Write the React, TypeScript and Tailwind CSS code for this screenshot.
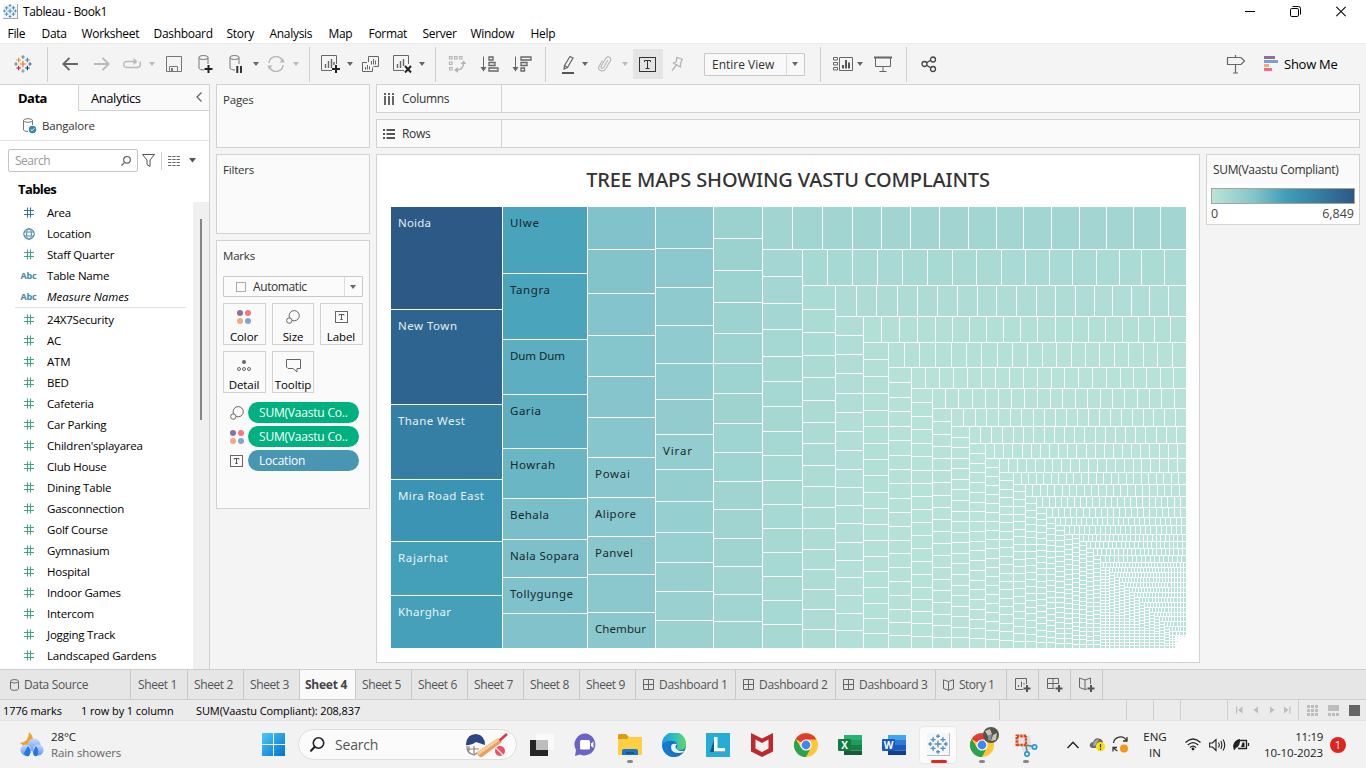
import React from "react";

/* ---------- Treemap ---------- */

type Cell = { x: number; y: number; w: number; h: number; fill: string };

const X0 = 391;
const Y0 = 207;
const X1 = 1187;
const Y1 = 649;

const mix = (a: string, b: string, t: number) => {
  const p = (s: string, i: number) => parseInt(s.slice(1 + i * 2, 3 + i * 2), 16);
  const c = [0, 1, 2].map((i) => Math.round(p(a, i) + (p(b, i) - p(a, i)) * t));
  return `rgb(${c.join(",")})`;
};

type Strip = { dir: "c" | "r"; end: number; cuts: number[] | number; from: string; to: string; fills?: string[] };

const strips: Strip[] = [
  {
    dir: "c", end: 502, cuts: [309, 404, 479, 541, 595], from: "", to: "",
    fills: ["#2c5985", "#2e6590", "#357fa5", "#3b94b3", "#449fb9", "#46a0ba"],
  },
  {
    dir: "c", end: 587, cuts: [273, 339, 394, 448, 498, 539, 577, 613], from: "", to: "",
    fills: ["#48a3bb", "#4aa4bc", "#5daec0", "#5fafc1", "#6bb6c4", "#79bec8", "#7dc0ca", "#80c2cb", "#82c3cb"],
  },
  { dir: "c", end: 655, cuts: [249, 293, 335, 376, 417, 457, 497, 536, 574, 612], from: "#82c3cb", to: "#8bc8ce" },
  { dir: "c", end: 713, cuts: [248, 287, 325, 363, 399, 434, 469, 501, 532, 562, 591, 620], from: "#8bc8ce", to: "#9bd2d0" },
  { dir: "c", end: 762, cuts: [238, 270, 302, 333, 363, 393, 423, 452, 481, 509, 538, 566, 594, 621], from: "#9bd2d0", to: "#a1d5d1" },
  { dir: "r", end: 249, cuts: [792, 822, 852, 881, 910, 939, 968, 996, 1023, 1051, 1079, 1106, 1133, 1160], from: "#a1d5d1", to: "#a3d6d2" },
  { dir: "c", end: 802, cuts: [276, 303, 329, 356, 381, 406, 431, 455, 480, 504, 528, 552, 576, 600, 624], from: "#a4d7d3", to: "#a7d9d4" },
  { dir: "r", end: 285, cuts: [827, 852, 877, 902, 927, 952, 976, 1001, 1025, 1049, 1072, 1096, 1119, 1141, 1164], from: "#a7d9d4", to: "#abdbd5" },
  { dir: "c", end: 835, cuts: [309, 332, 355, 377, 400, 422, 443, 465, 486, 507, 528, 549, 569, 589, 609, 629], from: "#abdbd5", to: "#aedcd5" },
  { dir: "r", end: 316, cuts: [856, 876, 897, 917, 937, 957, 977, 996, 1016, 1036, 1055, 1075, 1094, 1112, 1131, 1149, 1168], from: "#aedcd5", to: "#b0ded7" },
  { dir: "c", end: 863, cuts: [335, 354, 373, 393, 412, 431, 450, 469, 487, 505, 523, 542, 560, 577, 595, 613, 630], from: "#b0ded7", to: "#b2dfd7" },
  { dir: "r", end: 342, cuts: [881, 899, 917, 935, 952, 969, 986, 1003, 1020, 1037, 1055, 1072, 1088, 1105, 1122, 1138, 1154, 1170], from: "#b2e0d6", to: "#b3e0d6" },
  { dir: "c", end: 888, cuts: [359, 376, 393, 410, 426, 443, 459, 475, 492, 508, 524, 540, 556, 571, 587, 603, 618, 633], from: "#b3e0d6", to: "#b4e1d7" },
  { dir: "r", end: 367, cuts: [904, 919, 935, 951, 966, 981, 997, 1012, 1027, 1042, 1056, 1071, 1085, 1099, 1114, 1128, 1143, 1157, 1172], from: "#b4e1d7", to: "#b5e1d7" },
  { dir: "c", end: 911, cuts: [382, 397, 411, 426, 440, 455, 469, 483, 498, 512, 526, 540, 553, 567, 581, 595, 609, 622, 635], from: "#b5e1d7", to: "#b6e1d7" },
  { dir: "r", end: 388, cuts: [925, 939, 953, 967, 981, 995, 1009, 1023, 1037, 1051, 1064, 1078, 1092, 1106, 1120, 1133, 1146, 1160, 1173], from: "#b6e2d7", to: "#b6e2d7" },
  { dir: "c", end: 932, cuts: [402, 416, 429, 443, 456, 470, 483, 496, 509, 522, 535, 548, 561, 574, 587, 599, 611, 623, 636], from: "#b6e2d7", to: "#b7e2d8" },
  { dir: "r", end: 408, cuts: [945, 958, 972, 985, 998, 1011, 1024, 1037, 1050, 1062, 1075, 1087, 1100, 1112, 1124, 1137, 1149, 1161, 1174], from: "#b7e2d8", to: "#b7e2d8" },
  { dir: "c", end: 951, cuts: [421, 434, 446, 458, 470, 482, 495, 507, 519, 531, 543, 555, 567, 579, 590, 602, 614, 625, 637], from: "#b7e2d8", to: "#b7e2d8" },
  { dir: "r", end: 426, cuts: [963, 975, 986, 998, 1010, 1021, 1033, 1044, 1055, 1066, 1077, 1088, 1099, 1110, 1121, 1132, 1143, 1153, 1164, 1175], from: "#b7e3d8", to: "#b8e3d8" },
  { dir: "c", end: 969, cuts: 21, from: "#b8e3d8", to: "#b8e3d8" },
  { dir: "r", end: 443, cuts: [980, 991, 1002, 1013, 1023, 1033, 1044, 1054, 1064, 1074, 1084, 1095, 1105, 1115, 1125, 1135, 1145, 1156, 1166, 1176], from: "#b8e3d8", to: "#b8e3d8" },
];

const tail: [("c" | "r"), number, number][] = [
  ["c", 985, 21], ["r", 458, 22], ["c", 999, 21], ["r", 472, 21], ["c", 1013, 21], ["r", 484, 23],
  ["c", 1025, 22], ["r", 496, 22], ["c", 1036, 22], ["r", 507, 24], ["c", 1046, 23], ["r", 517, 23],
  ["c", 1055, 23], ["r", 525, 25], ["c", 1064, 24], ["r", 534, 24], ["c", 1072, 23], ["c", 1079, 26],
  ["r", 541, 25], ["c", 1086, 25], ["r", 548, 23], ["c", 1093, 24], ["r", 555, 22], ["c", 1100, 22],
  ["r", 562, 19], ["r", 567, 27], ["c", 1105, 27], ["c", 1109, 27], ["r", 572, 25], ["c", 1114, 25],
  ["r", 577, 24], ["c", 1119, 24], ["r", 582, 22], ["c", 1124, 22], ["r", 587, 20], ["c", 1129, 20],
  ["r", 592, 19], ["c", 1134, 19], ["r", 597, 17], ["c", 1139, 17], ["r", 602, 15], ["c", 1144, 15],
  ["r", 607, 14], ["c", 1149, 14], ["r", 612, 12], ["c", 1154, 12], ["r", 616, 11], ["c", 1159, 11],
  ["r", 621, 9], ["c", 1164, 9], ["r", 626, 7], ["c", 1169, 8], ["r", 631, 6], ["r", 635, 5],
  ["c", 1172, 5], ["c", 1175, 5],
];

tail.forEach(([dir, end, cuts]) => strips.push({ dir, end, cuts, from: "#b9e4d8", to: "#bae4d8" }));

const buildCells = () => {
  const cells: Cell[] = [];
  let x = X0;
  let y = Y0;
  for (const s of strips) {
    const start = s.dir === "c" ? y : x;
    const stop = s.dir === "c" ? Y1 : X1;
    let cuts: number[];
    if (typeof s.cuts === "number") {
      const n = s.cuts;
      cuts = Array.from({ length: n - 1 }, (_, i) => {
        const t = (i + 1) / n;
        return Math.round(start + (stop - start) * t) - 1;
      });
    } else cuts = s.cuts;
    const edges = [start - 1, ...cuts, stop - 1];
    for (let i = 0; i < edges.length - 1; i++) {
      const a = edges[i] + 1;
      const len = edges[i + 1] - a;
      const fill = s.fills ? s.fills[i] : mix(s.from, s.to, i / (edges.length - 2));
      cells.push(
        s.dir === "c"
          ? { x, y: a, w: s.end - x, h: len, fill }
          : { x: a, y, w: len, h: s.end - y, fill }
      );
    }
    if (s.dir === "c") x = s.end + 1;
    else y = s.end + 1;
  }
  [[1177, 636], [1180, 636], [1184, 636], [1177, 638], [1180, 638], [1177, 641]].forEach(([cx, cy]) =>
    cells.push({ x: cx, y: cy, w: 1, h: 1, fill: "#bae4d8" })
  );
  return cells;
};

const cells = buildCells();

const labels: [string, number, number, number, string][] = [
  ["Noida", 398, 227, 33, "#e4edf2"],
  ["New Town", 398, 330, 59, "#e4edf2"],
  ["Thane West", 398, 425, 67, "#e6f0f4"],
  ["Mira Road East", 398, 500, 86, "#e8f3f6"],
  ["Rajarhat", 398, 562, 50, "#e8f4f7"],
  ["Kharghar", 398, 616, 53, "#e8f4f7"],
  ["Ulwe", 510, 227, 29, "#16282d"],
  ["Tangra", 510, 294, 40, "#16282d"],
  ["Dum Dum", 510, 360, 55, "#16282d"],
  ["Garia", 510, 415, 31, "#16282d"],
  ["Howrah", 510, 469, 45, "#16282d"],
  ["Behala", 510, 519, 39, "#16282d"],
  ["Nala Sopara", 510, 560, 69, "#16282d"],
  ["Tollygunge", 510, 598, 63, "#16282d"],
  ["Powai", 595, 478, 35, "#1b2b2e"],
  ["Alipore", 595, 518, 41, "#1b2b2e"],
  ["Panvel", 595, 557, 38, "#1b2b2e"],
  ["Chembur", 595, 633, 51, "#1b2b2e"],
  ["Virar", 663, 455, 29, "#1b2b2e"],
];

const Treemap = () => (
  <svg className="block" width={796} height={442} viewBox={`${X0} ${Y0} 796 442`} shapeRendering="crispEdges">
    {cells.map((c, i) => (
      <rect key={i} x={c.x} y={c.y} width={c.w} height={c.h} fill={c.fill} />
    ))}
    {labels.map(([t, x, y, w, f]) => (
      <text key={t} x={x} y={y} fill={f} textLength={w} className="font-['Noto_Sans',sans-serif] text-[11.5px]">
        {t}
      </text>
    ))}
  </svg>
);

/* ---------- Icons ---------- */

type SvgProps = { w: number; h: number; className?: string; children: React.ReactNode };
const I = ({ w, h, className = "", children }: SvgProps) => (
  <svg width={w} height={h} viewBox={`0 0 ${w} ${h}`} fill="none" className={`block shrink-0 ${className}`}>
    {children}
  </svg>
);

const Plus = ({ x, y, r, c }: { x: number; y: number; r: number; c: string }) => (
  <path d={`M${x - r} ${y}H${x + r}M${x} ${y - r}V${y + r}`} stroke={c} strokeWidth={1.2} />
);

const TableauMark = ({ mono, size = 18 }: { mono?: string; size?: number }) => (
  <svg width={size} height={size} viewBox="0 0 18 18" fill="none" className="block shrink-0">
    <Plus x={9} y={9} r={3.2} c={mono ?? "#e8762d"} />
    <Plus x={4.6} y={5} r={2.3} c={mono ?? "#eb912c"} />
    <Plus x={13.4} y={5} r={2.3} c={mono ?? "#59879b"} />
    <Plus x={4.6} y={13} r={2.3} c={mono ?? "#c72035"} />
    <Plus x={13.4} y={13} r={2.3} c={mono ?? "#1f457e"} />
    <Plus x={9} y={2} r={1.7} c={mono ?? "#5b879b"} />
    <Plus x={9} y={16} r={1.7} c={mono ?? "#7099a6"} />
    <Plus x={2} y={9} r={1.7} c={mono ?? "#5b879b"} />
    <Plus x={16} y={9} r={1.7} c={mono ?? "#5c6692"} />
  </svg>
);

const Caret = ({ className = "", c = "#666" }: { className?: string; c?: string }) => (
  <I w={6} h={4} className={className}>
    <path d="M0 0H6L3 4Z" fill={c} />
  </I>
);

const Sep = ({ className }: { className: string }) => <div className={`h-[35px] w-px shrink-0 bg-[#cfcfcf] ${className}`} />;

const Hash = ({ c }: { c: string }) => (
  <I w={10} h={11}>
    <path d="M3.5 0.5V10.5M6.5 0.5V10.5M0 3.5H10M0 7.5H10" stroke={c} strokeWidth={1.1} />
  </I>
);

const Globe = () => (
  <I w={12} h={12}>
    <circle cx={6} cy={6} r={5.2} stroke="#4e8fae" strokeWidth={1.2} />
    <ellipse cx={6} cy={6} rx={2.4} ry={5.2} stroke="#4e8fae" />
    <path d="M1 4H11M1 8H11" stroke="#4e8fae" />
  </I>
);

const ColorDots = ({ className = "" }: { className?: string }) => (
  <I w={14} h={14} className={className}>
    <circle cx={3} cy={3} r={3} fill="#8a729b" />
    <circle cx={11} cy={3} r={3} fill="#f97480" />
    <circle cx={3} cy={11} r={3} fill="#f5a87d" />
    <circle cx={11} cy={11} r={3} fill="#83a5cd" />
  </I>
);

const SizeIcon = () => (
  <I w={14} h={14}>
    <circle cx={8.2} cy={5.7} r={5.1} stroke="#666" />
    <circle cx={3.3} cy={10.6} r={2.7} stroke="#666" fill="#fafafa" />
  </I>
);

const LabelIcon = () => (
  <I w={13} h={12}>
    <rect x={0.5} y={0.5} width={12} height={11} stroke="#666" />
    <path d="M4 4.5V3.5H9V4.5M6.5 3.5V8.5M5.3 8.5H7.7" stroke="#555" />
  </I>
);

const DbIcon = ({ children, c = "#777" }: { children?: React.ReactNode; c?: string }) => (
  <>
    <ellipse cx={5.5} cy={2.5} rx={4.6} ry={2} stroke={c} />
    <path d="M1 2.5V13C1 14 3 15 6 15M10 2.5V9" stroke={c} />
    {children}
  </>
);

const GridIcon = () => (
  <I w={11} h={11}>
    <path d="M0.5 0.5H10.5V10.5H0.5ZM5.5 0.5V10.5M0.5 5.5H10.5" stroke="#666" />
  </I>
);

const BookIcon = () => (
  <I w={11} h={12}>
    <path d="M0.5 0.8L5.5 2.5L10.5 0.8V9.5L5.5 11.3L0.5 9.5ZM5.5 2.5V11.3" stroke="#666" />
  </I>
);

/* ---------- Top area ---------- */

const TitleBar = () => (
  <div className="flex h-[23px] items-center pl-[3px]">
    <div className="border-b border-r border-[#aaa] bg-[#f3f6f8]">
      <TableauMark mono="#3f88b5" size={14} />
    </div>
    <span className="ml-[5px] text-[12px] leading-none tracking-[-0.4px] text-black">Tableau - Book1</span>
    <div className="ml-auto flex items-center pr-[20px]">
      <I w={10} h={11} className="mr-[35px]">
        <path d="M0 5.5H10" stroke="#000" />
      </I>
      <I w={11} h={11} className="mr-[35px]">
        <rect x={0.5} y={2.5} width={8} height={8} rx={1.3} stroke="#000" />
        <path d="M2.5 0.5H8.5Q10.5 0.5 10.5 2.5V8.5" stroke="#000" />
      </I>
      <I w={10} h={11}>
        <path d="M0.3 0.8L9.7 10.2M9.7 0.8L0.3 10.2" stroke="#000" strokeWidth={1.1} />
      </I>
    </div>
  </div>
);

const menus: [string, string][] = [
  ["File", "w-[34px]"], ["Data", "w-[40px]"], ["Worksheet", "w-[72px]"], ["Dashboard", "w-[73px]"],
  ["Story", "w-[43px]"], ["Analysis", "w-[59px]"], ["Map", "w-[40px]"], ["Format", "w-[54px]"],
  ["Server", "w-[48px]"], ["Window", "w-[60px]"], ["Help", "w-[30px]"],
];

const MenuBar = () => (
  <div className="flex h-5 items-center pl-[7.5px] text-[12px] leading-none text-black">
    {menus.map(([m, w]) => (
      <span key={m} className={`shrink-0 pt-0.5 tracking-[-0.3px] ${w}`}>{m}</span>
    ))}
  </div>
);

const Toolbar = () => (
  <div className="flex h-[41px] items-center border-t border-[#ebebeb] bg-[#f4f4f4]">
    <div className="ml-[14px]"><TableauMark /></div>
    <Sep className="ml-[15px]" />
    <I w={16} h={14} className="ml-[14px]">
      <path d="M16 7H1.5M7.5 0.8L1.3 7L7.5 13.2" stroke="#666" strokeWidth={1.9} />
    </I>
    <I w={16} h={14} className="ml-[16px]">
      <path d="M0 7H14.5M8.5 0.8L14.7 7L8.5 13.2" stroke="#bababa" strokeWidth={1.9} />
    </I>
    <I w={18} h={12} className="ml-[13px]">
      <path d="M12 3.5H4Q0.7 3.5 0.7 6.5T4 9.5H14Q17.3 9.5 17.3 6.8V3.5" stroke="#bababa" strokeWidth={1.4} />
      <path d="M10.5 0V7L14.5 3.5Z" fill="#bababa" />
    </I>
    <Caret className="ml-2" c="#bababa" />
    <I w={16} h={16} className="ml-[11px]">
      <path d="M0.5 0.5H15.5V15.5H0.5Z" stroke="#777" />
      <path d="M3.5 15V10.5H11.5V15" stroke="#777" />
      <path d="M5 12H7V15H5Z" fill="#777" />
    </I>
    <I w={16} h={18} className="ml-[16px]">
      <DbIcon />
      <path d="M10.5 10V18M6.5 14H14.5" stroke="#222" strokeWidth={2} />
    </I>
    <I w={16} h={18} className="ml-[15px]">
      <DbIcon />
      <path d="M8.3 11V18M12 11V18" stroke="#333" strokeWidth={2} />
    </I>
    <Caret className="ml-2" />
    <I w={18} h={16} className="ml-2">
      <path d="M2 7A7 7 0 0 1 15 4M16 9A7 7 0 0 1 3 12" stroke="#bababa" strokeWidth={1.5} />
      <path d="M12.5 6.5H17.5L16 2ZM0.5 9.5H5.5L2 14Z" fill="#bababa" />
    </I>
    <Caret className="ml-2" c="#bababa" />
    <Sep className="ml-[10px]" />
    <I w={21} h={18} className="ml-[11px] -mr-px">
      <path d="M15.5 9V0.5H0.5V15.5H11" stroke="#666" />
      <path d="M4.5 13V9M7.5 13V6M10.5 13V4M13 10V7" stroke="#666" strokeWidth={1.4} />
      <path d="M15 10V18M11 14H19" stroke="#222" strokeWidth={2} />
    </I>
    <Caret className="ml-1.5" />
    <I w={19} h={17} className="ml-[9px]">
      <path d="M6.5 6V0.5H16.5V10.5H11.5" stroke="#666" />
      <path d="M5 6.5H0.5V15.5H10.5V11.5" stroke="#666" />
      <path d="M9.5 8.5V5M11.5 8.5V3M13.5 8.5V4.5M3.5 13.5V11M5.5 13.5V9M7.5 13.5V10.5" stroke="#666" />
    </I>
    <I w={21} h={18} className="ml-[12px] -mr-px">
      <path d="M15.5 9V0.5H0.5V15.5H11" stroke="#666" />
      <path d="M4.5 13V9M7.5 13V6M10.5 11V4" stroke="#666" strokeWidth={1.4} />
      <path d="M12 11L18 17.5M18 11L12 17.5" stroke="#222" strokeWidth={2} />
    </I>
    <Caret className="ml-1.5" />
    <Sep className="ml-[10px]" />
    <I w={19} h={18} className="ml-[12px]">
      <path d="M1.5 1.5H4V4H1.5ZM6.5 1.5H9V4H6.5ZM11.5 1.5H14V4H11.5ZM1.5 7H4V9.5H1.5ZM1.5 12.5H4V15H1.5Z" stroke="#b5b5b5" strokeWidth={1.2} />
      <path d="M15.5 8Q15.5 14.5 9 15" stroke="#b5b5b5" strokeWidth={1.5} />
      <path d="M12.5 9L15.5 5.5L18.5 9ZM10 12V18L6 15Z" fill="#b5b5b5" />
    </I>
    <I w={20} h={16} className="ml-[13px]">
      <path d="M3.5 0.5V12" stroke="#666" />
      <path d="M0.5 11H6.5L3.5 15.5Z" fill="#666" />
      <path d="M9 1H13V4H9ZM9 6.500H15V9.500H9ZM9 12H18V15H9Z" stroke="#666" strokeWidth={1.3} />
    </I>
    <I w={20} h={16} className="ml-[12px]">
      <path d="M3.5 0.5V12" stroke="#666" />
      <path d="M0.5 11H6.5L3.5 15.5Z" fill="#666" />
      <path d="M9 1H19V4H9ZM9 6.500H15V9.500H9ZM9 12H12.500V15H9Z" stroke="#666" strokeWidth={1.3} />
    </I>
    <Sep className="ml-[13px]" />
    <I w={14} h={19} className="ml-[15px]">
      <path d="M9 1.5L12 3L6.5 12.5L3 14L3.5 10.5ZM3.5 10.5L6.5 12.5" stroke="#666" strokeWidth={1.2} />
      <path d="M1 18H13" stroke="#555" strokeWidth={2} />
    </I>
    <Caret className="ml-[7px]" />
    <I w={14} h={16} className="ml-[10px]">
      <path d="M10 4L5.5 11.5Q4.5 13 3.5 12T3.5 9.5L8 2Q9.5 0.2 11.5 1.2T12.5 4.5L7.5 13Q5.5 16 2.5 14.5T1 10.5L4.5 4.5" stroke="#b5b5b5" strokeWidth={1.1} />
    </I>
    <Caret className="ml-[10px]" c="#bababa" />
    <div className="ml-[5px] flex h-[30px] w-[30px] shrink-0 items-center justify-center bg-[#e4e4e4] pr-px">
      <I w={17} h={15}>
        <rect x={0.5} y={0.5} width={16} height={14} stroke="#333" />
        <path d="M5.5 5V3.5H11.5V5M8.5 3.5V11.5M6.5 11.5H10.5" stroke="#333" />
      </I>
    </div>
    <I w={13} h={16} className="ml-2">
      <path d="M5 1L12 3.5M6 1.5L5 6L2.5 7L9.5 11L9.5 8L11 3M5.5 9L1 14.5" stroke="#b5b5b5" strokeWidth={1.3} />
    </I>
    <div className="ml-[20px] flex h-[23px] w-[101px] shrink-0 items-center rounded-[1px] border border-[#c8c8c8] bg-[#f9f9f9]">
      <span className="flex-1 pl-[7px] pt-px text-[12px] leading-none text-[#333]">Entire View</span>
      <div className="flex h-full w-[18px] items-center justify-center border-l border-[#dcdcdc] pr-px"><Caret /></div>
    </div>
    <Sep className="ml-[15px]" />
    <I w={21} h={16} className="ml-[12px]">
      <path d="M0.5 1.5H4.5V4H0.5ZM0.5 6.5H4.5V9H0.5ZM0.5 11.5H4.5V14H0.5ZM6.5 1.5H19.5V14.5H6.5Z" stroke="#666" />
      <path d="M10 12.5V9M13 12.5V4M16 12.5V6.5" stroke="#555" strokeWidth={2} />
    </I>
    <Caret className="ml-[3px]" />
    <I w={18} h={16} className="ml-[11px]">
      <path d="M0 1.5H18" stroke="#666" strokeWidth={2} />
      <path d="M1.5 1.5V10.5H16.5V1.5M9 10.5V15.5M5.5 15.5H12.5" stroke="#666" />
    </I>
    <Sep className="ml-[14px]" />
    <I w={16} h={17} className="ml-[14px]">
      <path d="M6 6.5L10 4M6 9.5L10 12" stroke="#444" strokeWidth={1.4} />
      <circle cx={3.5} cy={8} r={2.5} stroke="#444" strokeWidth={1.3} />
      <circle cx={12} cy={3.5} r={2.5} stroke="#444" strokeWidth={1.3} />
      <circle cx={12} cy={13} r={2.5} stroke="#444" strokeWidth={1.3} />
    </I>
    <I w={20} h={19} className="ml-auto">
      <path d="M9.5 0V2M9.5 10V18M7 18H12M1.5 2.5H15L18.5 6L15 9.5H1.5Z" stroke="#666" strokeWidth={1.2} />
    </I>
    <I w={14} h={16} className="ml-[18px]">
      <path d="M0 0H11V3H0Z" fill="#8a729b" />
      <path d="M0 4H14V7H0Z" fill="#7ba0cc" />
      <path d="M0 8H5V11H0Z" fill="#f5a87d" />
      <path d="M0 12H8V15H0Z" fill="#f9697a" />
    </I>
    <span className="ml-1.5 mr-[28px] w-[54px] whitespace-nowrap text-[13px] leading-none tracking-[-0.25px] text-black">Show Me</span>
  </div>
);

/* ---------- Data pane ---------- */

const dims: [string, string][] = [
  ["Area", "hashb"], ["Location", "globe"], ["Staff Quarter", "hash"], ["Table Name", "abc"], ["Measure Names", "abci"],
];
const measures = [
  "24X7Security", "AC", "ATM", "BED", "Cafeteria", "Car Parking", "Children'splayarea", "Club House", "Dining Table",
  "Gasconnection", "Golf Course", "Gymnasium", "Hospital", "Indoor Games", "Intercom", "Jogging Track", "Landscaped Gardens",
];

const FieldRow = ({ name, kind }: { name: string; kind: string }) => (
  <div className="flex h-[21px] items-center">
    <div className="flex w-[17px] shrink-0 justify-center">
      {kind === "hash" && <Hash c="#45a583" />}
      {kind === "hashb" && <Hash c="#37779f" />}
      {kind === "globe" && <Globe />}
      {kind.startsWith("abc") && <span className="text-[9px] font-bold leading-none tracking-[-0.2px] text-[#4485a5]">Abc</span>}
    </div>
    <span className={`ml-[10px] whitespace-nowrap text-[11.5px] leading-none text-black ${kind === "abci" ? "italic" : "tracking-[-0.2px]"}`}>
      {name}
    </span>
  </div>
);

const DataPane = () => (
  <div className="flex w-[210px] shrink-0 flex-col border-r border-t border-[#d2d2d2] bg-white">
    <div className="flex h-[26px] shrink-0">
      <div className="w-[78px] pl-[18px] pt-[7px] text-[13px] font-bold leading-none tracking-[-0.5px] text-black">Data</div>
      <div className="flex flex-1 items-center border-b border-l border-[#d2d2d2] bg-[#fafafa] pl-3 text-[13px] leading-none tracking-[-0.45px] text-black">
        <span className="pt-px">Analytics</span>
        <I w={6} h={10} className="ml-auto mr-[7px] mb-0.5">
          <path d="M5.5 0.5L1 5L5.5 9.5" stroke="#666" strokeWidth={1.3} />
        </I>
      </div>
    </div>
    <div className="flex h-[30px] shrink-0 items-center border-b border-[#e3e3e3] pl-[23px]">
      <I w={14} h={16}>
        <ellipse cx={5} cy={2.5} rx={4.5} ry={1.8} stroke="#777" />
        <path d="M0.5 2.5V12Q1 13.5 5 13.5M9.5 2.5V7" stroke="#777" />
        <circle cx={9.5} cy={11.5} r={3.7} fill="#3a87ad" />
        <path d="M7.7 11.5L9 12.8L11.3 10.3" stroke="#fff" />
      </I>
      <span className="ml-[5px] text-[11.5px] leading-none tracking-[-0.2px] text-[#333]">Bangalore</span>
    </div>
    <div className="flex shrink-0 items-center pl-2 pt-2">
      <div className="flex h-[23px] w-[130px] items-center rounded-[2px] border border-[#c4c4c4] pl-1.5 pr-[6px]">
        <span className="flex-1 text-[12px] leading-none tracking-[-0.5px] text-[#999]">Search</span>
        <I w={10} h={10}>
          <circle cx={6} cy={3.8} r={3.3} stroke="#666" strokeWidth={1.2} />
          <path d="M3.6 6.4L0.5 9.5" stroke="#666" strokeWidth={1.3} />
        </I>
      </div>
      <I w={13} h={13} className="ml-1">
        <path d="M0.5 0.5H12.5L8 6V12.5L5 10.5V6Z" stroke="#555" />
      </I>
      <div className="ml-[6px] h-[18px] w-px bg-[#d0d0d0]" />
      <I w={12} h={10} className="ml-[6px]">
        <path d="M0 0.5H12M0 3.5H12M0 6.5H12M0 9.5H12" stroke="#666" strokeWidth={1.2} strokeDasharray="3.3 1" />
      </I>
      <I w={7} h={5} className="ml-[9px]"><path d="M0 0H7L3.5 4.5Z" fill="#555" /></I>
    </div>
    <div className="flex h-[30px] shrink-0 items-end pb-[6px] pl-[18px] text-[13px] font-bold leading-none tracking-[-0.6px] text-black">
      Tables
    </div>
    <div className="flex min-h-0 flex-1">
      <div className="flex-1 overflow-hidden pl-5">
        {dims.map(([n, k]) => <FieldRow key={n} name={n} kind={k} />)}
        <div className="-ml-[5px] mb-px mr-[7px] h-px bg-[#e0e0e0]" />
        {measures.map((n) => <FieldRow key={n} name={n} kind="hash" />)}
      </div>
      <div className="w-4 shrink-0 bg-[#f0f0f0] pl-[7px] pt-[17px]">
        <div className="h-[201px] w-[2px] bg-[#868686]" />
      </div>
    </div>
  </div>
);

/* ---------- Cards ---------- */

const card = "border border-[#d2d2d2] bg-[#fafafa]";
const cardTitle = "text-[11.5px] leading-none tracking-[-0.2px] text-[#333]";

const MarkButton = ({ label, children, w }: { label: string; children: React.ReactNode; w: string }) => (
  <div className={`flex h-[42px] flex-col items-center justify-between border border-[#d2d2d2] pb-px pt-[6px] ${w}`}>
    {children}
    <span className="text-[11.5px] leading-[12px] tracking-[-0.1px] text-black">{label}</span>
  </div>
);

const Pill = ({ icon, text, blue }: { icon: React.ReactNode; text: string; blue?: boolean }) => (
  <div className="flex h-[21px] items-center">
    <div className="flex w-[25px] pl-[7px]">{icon}</div>
    <div className={`flex h-[21px] w-[111px] items-center rounded-full pl-[11px] text-[12px] leading-none tracking-[-0.2px] text-white ${blue ? "bg-[#4996b2]" : "bg-[#00b180]"}`}>
      {text}
    </div>
  </div>
);

const Cards = () => (
  <div className="flex w-[154px] shrink-0 flex-col">
    <div className={`${card} h-16 pl-1.5 pt-[9px]`}><span className={`block ${cardTitle}`}>Pages</span></div>
    <div className={`${card} mt-1.5 h-20 pl-1.5 pt-[9px]`}><span className={`block ${cardTitle}`}>Filters</span></div>
    <div className={`${card} mt-1.5 h-[269px] pl-1.5 pr-1.5 pt-[9px]`}>
      <span className={`block ${cardTitle}`}>Marks</span>
      <div className="mt-[14.5px] flex h-[21px] w-[140px] items-center rounded-[1px] border border-[#c8c8c8] bg-[#fbfbfb]">
        <div className="ml-3 h-[10px] w-[10px] border border-[#aaa]" />
        <span className="ml-[7px] flex-1 pt-px text-[12px] leading-none tracking-[-0.4px] text-[#333]">Automatic</span>
        <div className="flex h-full w-[18px] items-center justify-center border-l border-[#dcdcdc] pr-px"><Caret /></div>
      </div>
      <div className="mt-[5.5px] flex flex-wrap gap-x-1.5 gap-y-1.5">
        <MarkButton label="Color" w="w-[43px] pr-px"><ColorDots /></MarkButton>
        <MarkButton label="Size" w="w-[42px]"><SizeIcon /></MarkButton>
        <MarkButton label="Label" w="w-[43px] pr-px"><div className="pt-px"><LabelIcon /></div></MarkButton>
        <MarkButton label="Detail" w="w-[43px] pr-px">
          <I w={14} h={12} className="mt-0.5">
            <circle cx={7} cy={2} r={2} fill="#666" />
            <circle cx={2} cy={9} r={1.5} stroke="#666" />
            <circle cx={7} cy={9} r={1.5} stroke="#666" />
            <circle cx={12} cy={9} r={1.5} stroke="#666" />
          </I>
        </MarkButton>
        <MarkButton label="Tooltip" w="w-[42px]">
          <I w={15} h={14} className="mt-px">
            <path d="M0.5 0.5H14.5V9.5H11V13L7 9.5H2L0.5 8Z" stroke="#666" />
          </I>
        </MarkButton>
      </div>
      <div className="mt-[9.5px] flex flex-col gap-[3px]">
        <Pill icon={<SizeIcon />} text="SUM(Vaastu Co.." />
        <Pill icon={<ColorDots />} text="SUM(Vaastu Co.." />
        <Pill icon={<LabelIcon />} text="Location" blue />
      </div>
    </div>
  </div>
);

const Shelf = ({ label, children }: { label: string; children: React.ReactNode }) => (
  <div className={`${card} flex h-[29px] shrink-0 items-stretch`}>
    <div className="flex w-[125px] items-center border-r border-[#d2d2d2] pl-1.5">
      {children}
      <span className="ml-[7px] text-[12px] leading-none tracking-[-0.3px] text-[#333]">{label}</span>
    </div>
  </div>
);

const Workspace = () => (
  <div className="flex min-w-0 flex-1 flex-col gap-1.5 pb-1.5">
    <Shelf label="Columns">
      <I w={12} h={12}><path d="M2 0V2M6 0V2M10 0V2M2 3V12M6 3V12M10 3V12" stroke="#666" strokeWidth={2} /></I>
    </Shelf>
    <Shelf label="Rows">
      <I w={12} h={10}><path d="M0 1H2M0 5H2M0 9H2M3.5 1H12M3.5 5H12M3.5 9H12" stroke="#555" strokeWidth={1.8} /></I>
    </Shelf>
    <div className="flex min-h-0 flex-1 gap-1.5">
      <div className="flex w-[824px] shrink-0 flex-col border border-[#d2d2d2] bg-white pl-[14px]">
        <h1 className="flex h-[52px] w-[794px] items-center justify-center pb-0.5 font-['Noto_Sans',sans-serif] text-[20px] font-medium leading-none tracking-[-0.12px] text-[#333]">
          TREE MAPS SHOWING VASTU COMPLAINTS
        </h1>
        <Treemap />
      </div>
      <div className="flex h-[71px] flex-1 flex-col border border-[#d2d2d2] bg-white">
        <div className="h-[29px] whitespace-nowrap bg-[#fafafa] pl-1.5 pt-[9px] text-[12px] leading-none tracking-[-0.3px] text-[#333]">SUM(Vaastu Compliant)</div>
        <div className="mx-1 mt-1 h-4 shrink-0 border border-[#aaa492] bg-[linear-gradient(90deg,#bce4d8,#81c4cb_30%,#45a2b9_50%,#3991b1_62%,#2c5985)]" />
        <div className="flex justify-between pl-1 pr-[5px] pt-1 text-[12.5px] leading-none text-[#444]">
          <span>0</span>
          <span>6,849</span>
        </div>
      </div>
    </div>
  </div>
);

/* ---------- Bottom bars ---------- */

const tabBase = "flex h-full shrink-0 items-center border-r border-[#c9c9c9] text-[12px] leading-none";

const SheetTabs = () => (
  <div className="flex h-[31px] shrink-0 border-b border-t border-[#cdcdcd] bg-[#e6e6e6] text-[#555]">
    <div className={`${tabBase} w-[131px] pl-[10px] tracking-[-0.35px]`}>
      <I w={9} h={12}>
        <ellipse cx={4.5} cy={2.3} rx={4} ry={1.7} stroke="#666" />
        <path d="M0.5 2.5V10Q1 11.3 4.5 11.3T8.5 10V2.5" stroke="#666" />
      </I>
      <span className="ml-[5px]">Data Source</span>
    </div>
    {[1, 2, 3, 4, 5, 6, 7, 8, 9].map((n) => (
      <div
        key={n}
        className={`${tabBase} ${n === 1 ? "w-[57px]" : "w-[56px]"} ${n === 4 ? "bg-[#fafafa] pl-[5px] font-bold tracking-[-0.25px] text-[#444]" : "pl-1.5 tracking-[-0.4px]"} ${n === 1 ? "pl-[7px]" : ""}`}
      >
        Sheet {n}
      </div>
    ))}
    {[1, 2, 3].map((n) => (
      <div key={n} className={`${tabBase} w-[100px] gap-[5px] pl-[7px] tracking-[-0.3px]`}>
        <GridIcon />
        <span className="whitespace-nowrap">Dashboard {n}</span>
      </div>
    ))}
    <div className={`${tabBase} w-[71px] gap-[5px] pl-[7px] tracking-[-0.5px]`}>
      <BookIcon />
      <span>Story 1</span>
    </div>
    <div className={`${tabBase} w-8 justify-center`}>
      <I w={16} h={16}>
        <path d="M11.5 7V1.5H0.5V12.5H8M3.5 10V8M6.5 10V4.5M9 7.5V6" stroke="#666" />
        <path d="M12 8V15M8.5 11.5H15.5" stroke="#555" strokeWidth={2} />
      </I>
    </div>
    <div className={`${tabBase} w-8 justify-center`}>
      <I w={16} h={16}>
        <path d="M11.5 7V1.5H0.5V11.5H7.5M6 1.5V11.5M0.5 6.5H11.5" stroke="#666" />
        <path d="M12 8V15M8.5 11.5H15.5" stroke="#555" strokeWidth={2} />
      </I>
    </div>
    <div className={`${tabBase} w-8 justify-center`}>
      <I w={16} h={16}>
        <path d="M11.5 7V1L6 3L0.5 1V10.5L6 12.5L8 12M6 3V12.5" stroke="#666" />
        <path d="M12 8V15M8.5 11.5H15.5" stroke="#555" strokeWidth={2} />
      </I>
    </div>
  </div>
);

const StatusBar = () => (
  <div className="flex h-5 shrink-0 items-center bg-[#ebebeb] pl-[3px] text-[11px] leading-none tracking-[-0.1px] text-black">
    <span className="w-[78px] pt-px">1776 marks</span>
    <span className="w-[115px] pt-px">1 row by 1 column</span>
    <span className="w-[803px] pt-px">SUM(Vaastu Compliant): 208,837</span>
    <div className="h-full w-[127px] border-l border-[#cfcfcf]" />
    <div className="h-full w-[27px] border-l border-[#cfcfcf]" />
    <div className="h-full w-[27px] border-l border-[#cfcfcf]" />
    <div className="h-full w-[47px] border-l border-[#cfcfcf]" />
    <div className="flex h-full w-[71px] items-center border-l border-[#cfcfcf] pl-2">
      <I w={56} h={8}>
        <path d="M0 0.5H1.2V7.5H0ZM6.5 0.5V7.5L2 4ZM22 0.5V7.5L17.5 4ZM34 0.5V7.5L38.5 4ZM48 0.5V7.5L52.5 4ZM53.3 0.5H54.5V7.5H53.3Z" fill="#bdbdbd" />
      </I>
    </div>
    <div className="flex h-full flex-1 items-center border-l border-[#cfcfcf] pl-2">
      <I w={54} h={11}>
        <path d="M0 0H3V3H0ZM4 0H7V3H4ZM8 0H11V3H8ZM0 4H3V7H0ZM4 4H7V7H4ZM8 4H11V7H8ZM0 8H3V11H0ZM4 8H7V11H4ZM8 8H11V11H8ZM21 0H32V6H21ZM21 8H24V11H21ZM25 8H28V11H25ZM29 8H32V11H29Z" fill="#bdbdbd" />
        <path d="M42 0H53V11H42Z" fill="#666" />
      </I>
    </div>
  </div>
);

const Chrome = ({ size = 24 }: { size?: number }) => (
  <svg width={size} height={size} viewBox="0 0 24 24" className="block">
    <circle cx={12} cy={12} r={12} fill="#fcc934" />
    <path d="M12 12L1.6 6A12 12 0 0 1 22.4 6.5H12Z" fill="#e33b2e" />
    <path d="M1.6 6L7.2 14.7L12 17.5L16 16.5L12 24A12 12 0 0 1 1.6 6Z" fill="#2da24c" />
    <circle cx={12} cy={12} r={5.6} fill="#fff" />
    <circle cx={12} cy={12} r={4.4} fill="#4285f4" />
  </svg>
);

const Office = ({ letter, dark, a, b, c, d }: { letter: string; dark: string; a: string; b: string; c: string; d: string }) => (
  <I w={24} h={24}>
    <path d="M6 2H24V7H6Z" fill={a} />
    <path d="M6 7H24V12H6Z" fill={b} />
    <path d="M6 12H24V17.5H6Z" fill={c} />
    <path d="M6 17.5H24V22H6Z" fill={d} />
    <rect x={0} y={6} width={13} height={12} rx={1} fill={dark} />
    <text x={6.5} y={16} textAnchor="middle" fill="#fff" className="font-['Open_Sans',sans-serif] text-[10px] font-bold">{letter}</text>
  </I>
);

const TaskItem = ({ children, dot }: { children: React.ReactNode; dot?: boolean }) => (
  <div className="relative flex h-full w-[44px] shrink-0 items-center justify-center">
    {children}
    {dot && <div className="absolute bottom-[5px] left-[19px] h-[3px] w-[6px] rounded-full bg-[#8a8a8a]" />}
  </div>
);

const Taskbar = () => (
  <div className="flex h-12 shrink-0 items-center border-t border-[#e4e4e4] bg-[#f2f2f2]">
    <I w={26} h={26} className="ml-[19px]">
      <defs>
        <linearGradient id="cl" x1="0" y1="0" x2="0" y2="1"><stop offset="0" stopColor="#c5dcfb" /><stop offset="1" stopColor="#5f98ee" /></linearGradient>
      </defs>
      <path d="M10 0Q17 6 12 14Q6 16 1 11Q10 10 10 0Z" fill="#f2a325" />
      <circle cx={15} cy={13} r={6.5} fill="url(#cl)" />
      <circle cx={7} cy={18} r={5.5} fill="url(#cl)" />
      <circle cx={19} cy={18} r={5.5} fill="url(#cl)" />
      <path d="M9 14Q13 19 10 24Q6 25 5 21ZM17 14Q21 19 18 24Q14 25 14 20Z" fill="#2676e8" />
    </I>
    <div className="ml-[6px] flex w-[110px] flex-col gap-[4px] text-[11.5px] leading-[12px] tracking-[-0.1px]">
      <span className="text-[#1a1a1a]">28°C</span>
      <span className="text-[#666]">Rain showers</span>
    </div>
    <I w={23} h={23} className="ml-[101px]">
      <defs>
        <linearGradient id="wn" x1="0" y1="0" x2="1" y2="1"><stop offset="0" stopColor="#4cc9fa" /><stop offset="1" stopColor="#0071d0" /></linearGradient>
      </defs>
      <path d="M0 0H11V11H0ZM12 0H23V11H12ZM0 12H11V23H0ZM12 12H23V23H12Z" fill="url(#wn)" />
    </I>
    <div className="ml-[13px] flex h-[31px] w-[219px] items-center rounded-full border border-[#dedede] bg-[#fbfbfb] pl-[11px] pr-2">
      <I w={15} h={15}>
        <circle cx={8.5} cy={6} r={5.2} stroke="#222" strokeWidth={1.6} />
        <path d="M4.8 9.8L1 13.7" stroke="#222" strokeWidth={2} strokeLinecap="round" />
      </I>
      <span className="ml-[10px] flex-1 text-[14px] leading-none tracking-[-0.2px] text-[#555]">Search</span>
      <I w={44} h={26}>
        <path d="M3 14Q2 21 10 23L16 19M5 14V19M10 14V22M3 17H15" stroke="#888" strokeWidth={1.2} />
        <path d="M2 12Q3 2 12 2Q21 3 21 13L12 10Q7 14 2 13Z" fill="#2e4583" />
        <path d="M13 20L34 6L38 10L18 25Q14 26 13 20Z" fill="#e9a05c" />
        <path d="M13 20L34 6L36 8L15 23Z" fill="#f8cb98" />
        <path d="M35.5 8.5L43 2" stroke="#d8394a" strokeWidth={2.6} />
        <circle cx={36} cy={19} r={5} fill="#ea5065" />
        <path d="M32 16L39 23" stroke="#fbdde1" strokeWidth={1.5} />
      </I>
    </div>
    <div className="ml-[3px] flex h-full">
      <TaskItem>
        <I w={24} h={24}>
          <rect x={6} y={1} width={18} height={16} fill="#fafafa" />
          <rect x={0} y={7} width={18} height={16} fill="#262626" />
          <rect x={6} y={7} width={12} height={10} fill="#bdbdbd" />
        </I>
      </TaskItem>
      <TaskItem>
        <I w={24} h={24}>
          <path d="M12 0.5A11 11 0 1 1 6 21.5L1 23L2 17A11 11 0 0 1 12 0.5Z" fill="#6c63c8" />
          <rect x={6} y={7} width={10} height={9.5} rx={1.5} fill="#fff" />
          <path d="M17 10.5L19.500 8.500V15L17 13Z" fill="#fff" />
        </I>
      </TaskItem>
      <TaskItem dot>
        <I w={24} h={24}>
          <path d="M0 2Q0 1 1 1H8L10.5 3.5V8H0Z" fill="#dd9a12" />
          <path d="M0 6H9L11 4H23Q24 4 24 5V21Q24 22 23 22H1Q0 22 0 21Z" fill="#fdcf41" />
          <path d="M4 22V18Q4 16 6 16H18Q20 16 20 18V22Z" fill="#1c74c6" />
          <path d="M8 19H16V21H8Z" fill="#0d559f" />
        </I>
      </TaskItem>
      <TaskItem>
        <I w={24} h={24}>
          <defs>
            <linearGradient id="ed" x1="0" y1="0.3" x2="1" y2="0.3"><stop offset="0" stopColor="#1d9de0" /><stop offset="0.6" stopColor="#36c3b8" /><stop offset="1" stopColor="#63d957" /></linearGradient>
          </defs>
          <circle cx={12} cy={12} r={12} fill="#1272c4" />
          <path d="M0 11A12 12 0 0 1 24 11Q24 17 18 17Q13.5 16.5 15 14Q16 9 11 8Q4 7 0 13Z" fill="url(#ed)" />
          <path d="M9 14Q9 20 17 20Q21 20 23 17.5Q18 19 15 16.5Q12 14 15 11Q9 9.5 9 14Z" fill="#f2f2f2" />
          <path d="M0 12Q3 7 10 8.5Q5 12 8 18Q10 22 14 24Q3 25 0 12Z" fill="#0f7cd2" />
        </I>
      </TaskItem>
      <TaskItem>
        <I w={24} h={24}>
          <rect width={24} height={24} fill="#26acd9" />
          <path d="M4 19L9 4V15H18L19 19Z" fill="#125b78" />
          <path d="M8 4H11.5V15H19V18.5H8Z" fill="#fff" />
        </I>
      </TaskItem>
      <TaskItem>
        <I w={22} h={24}>
          <path d="M0 0L11 5.5L22 0V18.5L11 24L0 18.5Z" fill="#c0292c" />
          <path d="M4.5 6.5L11 10L17.5 6.5V15.5L11 19L4.5 15.5Z" fill="#f2f2f2" />
        </I>
      </TaskItem>
      <TaskItem><Chrome /></TaskItem>
      <TaskItem><Office letter="X" dark="#107c41" a="#27b472" b="#1f9b5c" c="#14804a" d="#185c37" /></TaskItem>
      <TaskItem><Office letter="W" dark="#185abd" a="#41a5ee" b="#2b7cd3" c="#185abd" d="#103f91" /></TaskItem>
      <TaskItem>
        <div className="relative flex h-[38px] w-[38px] shrink-0 items-center justify-center rounded border border-[#e8e8e8] bg-[#fbfbfb]">
          <div className="border-b border-r border-[#bbb] bg-[#f3f6f8] p-px"><TableauMark mono="#5a8fb0" size={20} /></div>
          <div className="absolute bottom-0 left-[11px] h-[3px] w-4 rounded-full bg-[#e3261f]" />
        </div>
      </TaskItem>
      <TaskItem dot>
        <div className="relative">
          <Chrome />
          <div className="absolute -top-[6px] left-[13px] h-4 w-4 overflow-hidden rounded-full bg-[#55534a]">
            <I w={16} h={16}>
              <path d="M2 4L7 2L9 7L5 9ZM10 8L14 6L13 13L8 14Z" fill="#c9c4ac" />
              <path d="M5 9L9 7L8 14L5 13Z" fill="#7a8fa6" />
            </I>
          </div>
        </div>
      </TaskItem>
      <TaskItem dot>
        <I w={24} h={24}>
          <path d="M5 5L16 2L18 16L9 19Z" fill="#e2e2e2" />
          <path d="M3 13V3H13" stroke="#dc4a1c" strokeWidth={3} strokeDasharray="2.5 0.8" />
          <path d="M3 12H12V3" stroke="#dc4a1c" strokeWidth={2.4} strokeDasharray="2.5 0.8" />
          <path d="M12 12L19 13.500M12 12L13 19" stroke="#777" strokeWidth={1.5} />
          <circle cx={20.5} cy={14} r={2.2} stroke="#1f9ce5" strokeWidth={1.7} />
          <circle cx={13} cy={21} r={2.2} stroke="#1f9ce5" strokeWidth={1.7} />
        </I>
      </TaskItem>
    </div>
    <I w={12} h={8} className="ml-[19px]">
      <path d="M0.5 7L6 1.3L11.5 7" stroke="#222" strokeWidth={1.4} />
    </I>
    <I w={17} h={15} className="ml-[10px]">
      <path d="M3 11Q0 10 1 7Q2 5 4 5Q6 0 10 1.5Q14 2 14 6V11Z" fill="#6d6d6d" />
      <path d="M5 5Q7 2 10 2.5L6 9Q3 9 5 5Z" fill="#aaa" />
      <circle cx={11.5} cy={9.8} r={4.7} fill="#fbe205" />
      <path d="M11.5 7V10.5M11.5 11.5V13" stroke="#333" strokeWidth={1.3} />
    </I>
    <I w={17} h={17} className="ml-[6px]">
      <path d="M1.5 7A7 7 0 0 1 14.5 4.5M15 1V5H11M5.5 15A7 7 0 0 1 1.5 11M1 15.5V11.5H5" stroke="#333" strokeWidth={1.3} />
      <circle cx={12} cy={12.5} r={4} fill="#fb9513" />
    </I>
    <div className="ml-[12px] flex w-7 flex-col items-center gap-[4px] text-[11.5px] leading-[12px] text-[#1a1a1a]">
      <span>ENG</span>
      <span>IN</span>
    </div>
    <I w={16} h={13} className="ml-4">
      <path d="M0.5 4.5Q8 -2.5 15.5 4.5M2.8 7Q8 2.2 13.2 7M5 9.5Q8 6.8 11 9.5" stroke="#222" strokeWidth={1.2} />
      <circle cx={8} cy={11} r={1.4} fill="#222" />
    </I>
    <I w={17} h={14} className="ml-2">
      <path d="M0.6 5H3.5L7 1.5V12.5L3.5 9H0.6ZM9.5 4.5Q11 7 9.5 9.5M11.8 3Q14 7 11.8 11M14 1.5Q17.5 7 14 12.5" stroke="#222" strokeWidth={1.1} />
    </I>
    <I w={17} h={13} className="ml-[7px]">
      <path d="M6 2.5H13.5V10.5H5M15.5 5V8" stroke="#222" strokeWidth={1.3} />
      <path d="M9.5 4.5H11.5V9H8Z" fill="#222" />
      <path d="M0 8Q1 2 7 1Q7.5 8 3 10L1 12.5Z" fill="#222" />
    </I>
    <div className="ml-auto flex flex-col items-end gap-[4px] text-[11.5px] leading-[12px] text-[#1a1a1a]">
      <span className="tracking-[-0.3px]">11:19</span>
      <span className="tracking-[-0.1px]">10-10-2023</span>
    </div>
    <div className="ml-[7px] mr-5 flex h-4 w-4 shrink-0 items-center justify-center rounded-full bg-[#e0231c] text-[11px] leading-none text-white">1</div>
  </div>
);

export default function App() {
  return (
    <div className="flex h-[768px] w-[1366px] flex-col overflow-hidden bg-white font-['Open_Sans','Noto_Sans',sans-serif]">
      <TitleBar />
      <MenuBar />
      <Toolbar />
      <div className="flex min-h-0 flex-1 bg-[#f4f4f4]">
        <DataPane />
        <div className="flex flex-1 gap-1.5 pl-1.5 pr-1.5">
          <Cards />
          <Workspace />
        </div>
      </div>
      <SheetTabs />
      <StatusBar />
      <Taskbar />
    </div>
  );
}
